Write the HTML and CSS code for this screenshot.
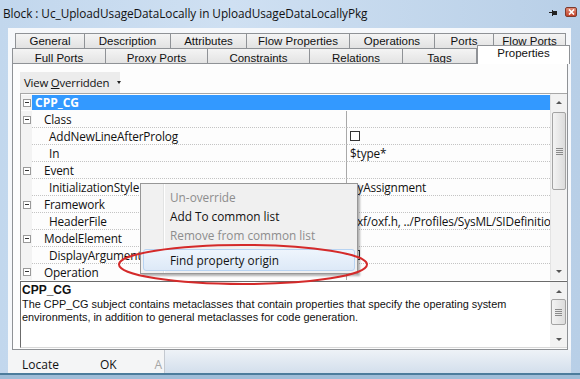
FILE: index.html
```html
<!DOCTYPE html>
<html lang="en">
<head>
    <meta charset="UTF-8">
    <meta name="viewport" content="width=device-width, initial-scale=1.0">
    <title>Block : Uc_UploadUsageDataLocally in UploadUsageDataLocallyPkg</title>
    <link rel="stylesheet" href="styles.css">
</head>
<body>
<div class="window">
    <div class="titlebar">
        <span class="title">Block : Uc_UploadUsageDataLocally in UploadUsageDataLocallyPkg</span>
        <svg class="pin" width="8" height="6" viewBox="0 0 8 6">
            <rect x="0" y="2" width="3" height="1" fill="#222"/>
            <rect x="3" y="0" width="1" height="6" fill="#222"/>
            <rect x="4" y="1" width="4" height="4" fill="#222"/>
        </svg>
        <span class="close">
            <svg width="7" height="6" viewBox="0 0 7 6">
                <path d="M1 0.5 L6 5.5 M6 0.5 L1 5.5" stroke="#fff" stroke-width="1.6"/>
            </svg>
        </span>
    </div>

    <div class="client">
        <div class="tabs">
            <div class="tabrow row1">
                <span class="tab">General</span>
                <span class="tab">Description</span>
                <span class="tab">Attributes</span>
                <span class="tab">Flow Properties</span>
                <span class="tab">Operations</span>
                <span class="tab">Ports</span>
                <span class="tab">Flow Ports</span>
            </div>
            <div class="tabrow row2">
                <span class="tab">Full Ports</span>
                <span class="tab">Proxy Ports</span>
                <span class="tab">Constraints</span>
                <span class="tab">Relations</span>
                <span class="tab">Tags</span>
                <span class="tab active">Properties</span>
            </div>
        </div>

        <div class="page">
            <div class="toolbar">
                <span class="view-btn"><span>View <u>O</u>verridden</span><span class="caret"></span></span>
            </div>

            <div class="grid">
                <div class="rows">
                    <div class="row selected">
                        <span class="gut"><i class="minus"></i></span>
                        <span class="name lvl0">CPP_CG</span>
                    </div>
                    <div class="row">
                        <span class="gut"><i class="minus"></i></span>
                        <span class="name lvl1">Class</span>
                        <span class="value"></span>
                    </div>
                    <div class="row">
                        <span class="gut"></span>
                        <span class="name lvl2">AddNewLineAfterProlog</span>
                        <span class="value"><i class="check"></i></span>
                    </div>
                    <div class="row">
                        <span class="gut"></span>
                        <span class="name lvl2">In</span>
                        <span class="value">$type*</span>
                    </div>
                    <div class="row">
                        <span class="gut"><i class="minus"></i></span>
                        <span class="name lvl1">Event</span>
                        <span class="value"></span>
                    </div>
                    <div class="row">
                        <span class="gut"></span>
                        <span class="name lvl2">InitializationStyle</span>
                        <span class="value">ByAssignment</span>
                    </div>
                    <div class="row">
                        <span class="gut"><i class="minus"></i></span>
                        <span class="name lvl1">Framework</span>
                        <span class="value"></span>
                    </div>
                    <div class="row">
                        <span class="gut"></span>
                        <span class="name lvl2">HeaderFile</span>
                        <span class="value">oxf/oxf.h, ../Profiles/SysML/SIDefinitio</span>
                    </div>
                    <div class="row">
                        <span class="gut"><i class="minus"></i></span>
                        <span class="name lvl1">ModelElement</span>
                        <span class="value"></span>
                    </div>
                    <div class="row">
                        <span class="gut"></span>
                        <span class="name lvl2">DisplayArguments</span>
                        <span class="value"><i class="check"></i></span>
                    </div>
                    <div class="row last">
                        <span class="gut"><i class="minus"></i></span>
                        <span class="name lvl1">Operation</span>
                        <span class="value"></span>
                    </div>
                </div>
                <div class="vscroll">
                    <span class="arrow up"></span>
                    <span class="thumb tall"><i class="grip"></i></span>
                    <span class="track"></span>
                    <span class="arrow down"></span>
                </div>
            </div>

            <div class="desc">
                <div class="desc-text">
                    <b>CPP_CG</b>
                    <p>The CPP_CG subject contains metaclasses that contain properties that specify the operating system environments, in addition to general metaclasses for code generation.</p>
                </div>
                <div class="vscroll small">
                    <span class="arrow up"></span>
                    <span class="thumb short"><i class="grip"></i></span>
                    <span class="track"></span>
                    <span class="arrow down"></span>
                </div>
            </div>
        </div>

        <div class="bottombar">
            <div class="buttons">
                <span class="btn">Locate</span>
                <span class="btn">OK</span>
                <span class="btn disabled">A</span>
            </div>
            <div class="filler"></div>
        </div>
    </div>
    <div class="frame-bottom"></div>

    <div class="ctxmenu">
        <div class="item disabled">Un-override</div>
        <div class="item">Add To common list</div>
        <div class="item disabled">Remove from common list</div>
        <div class="sep"></div>
        <div class="item hover">Find property origin</div>
    </div>

    <svg class="mark" width="256" height="46" viewBox="0 0 256 46">
        <ellipse cx="127" cy="22.5" rx="124" ry="19.5" fill="none" stroke="#d42a2a" stroke-width="2"/>
    </svg>
</div>
</body>
</html>
```

FILE: styles.css
```css
* {
    box-sizing: border-box;
}

body {
    margin: 0;
    width: 580px;
    height: 379px;
    overflow: hidden;
    font-family: "Liberation Sans", Arial, sans-serif;
    font-size: 11px;
    color: #000;
    background: #bcd2e9;
}

.window {
    position: relative;
    width: 580px;
    height: 379px;
    display: flex;
    flex-direction: column;
    background: linear-gradient(90deg, #c2d7ed, #cfe0f2 40%, #b8cfe7);
}

/* title bar */
.titlebar {
    height: 28px;
    display: flex;
    align-items: center;
    padding: 0 3px 2px 3px;
}

.title {
    flex: 1;
    font-family: "Open Sans", sans-serif;
    font-size: 11.8px;
    color: #111;
    letter-spacing: -0.05px;
}

.pin {
    margin-right: 8px;
}

.close {
    width: 12px;
    height: 10px;
    display: flex;
    align-items: center;
    justify-content: center;
    background: linear-gradient(#e08b76, #c3432a);
    border: 1px solid #7d3a2c;
    border-radius: 2px;
    margin-top: -2px;
}

/* client area */
.client {
    flex: 1;
    margin: 0 9px 0 8px;
    background: #f6f8fb;
    display: flex;
    flex-direction: column;
    padding-top: 5px;
}

.tabrow {
    display: grid;
    height: 15px;
}

.row1 {
    margin-left: 7px;
    grid-template-columns: 70px 86px 76px 103px 85px 59px 72px;
}

.row2 {
    margin-left: 4px;
    grid-template-columns: 94px 102px 102px 93px 74px 93px;
}

.tab {
    display: flex;
    align-items: center;
    justify-content: center;
    background: linear-gradient(#f4f4f4, #e2e2e2);
    border: 1px solid #8f9296;
    border-bottom: none;
    border-left: none;
    font-size: 11.5px;
    color: #111;
}

.tab:first-child {
    border-left: 1px solid #8f9296;
}

.row2 .tab {
    padding-top: 2px;
}

.tab.active {
    background: #fff;
    margin-top: -3px;
    height: 19px;
    padding-top: 0;
    padding-bottom: 4px;
    border-left: 1px solid #8f9296;
    position: relative;
    z-index: 1;
}

/* tab page */
.page {
    height: 287px;
    margin: 0 3px 0 4px;
    background: #fdfdfd;
    border: 1px solid #8f9296;
    padding: 8px 0 0 7px;
    display: flex;
    flex-direction: column;
}

.toolbar {
    height: 21px;
    display: flex;
}

.view-btn {
    width: 100px;
    display: flex;
    align-items: center;
    padding-left: 4px;
    background: #ececec;
    font-family: "Open Sans", sans-serif;
    font-size: 11.4px;
    color: #111;
    letter-spacing: -0.2px;
    white-space: nowrap;
}

.caret {
    margin-left: 8px;
    border-left: 2px solid transparent;
    border-right: 2px solid transparent;
    border-top: 3px solid #222;
}

.grid {
    height: 187px;
    display: flex;
    border-top: 1px solid #a7a7a7;
    border-left: 1px solid #a7a7a7;
}

.rows {
    width: 529px;
    display: flex;
    flex-direction: column;
}

.row {
    height: 17px;
    display: flex;
    font-family: "Open Sans", sans-serif;
    font-size: 11.8px;
    color: #111;
    letter-spacing: -0.15px;
}

.row .gut {
    width: 11px;
    flex: none;
    display: flex;
    align-items: center;
    justify-content: center;
    background: #f3f3f3;
}

.minus {
    width: 8px;
    height: 8px;
    border: 1px solid #9a9a9a;
    background: #fff;
    position: relative;
}

.minus::after {
    content: "";
    position: absolute;
    left: 1px;
    top: 2px;
    width: 4px;
    height: 1px;
    background: #333;
}

.row .name {
    width: 315px;
    flex: none;
    display: flex;
    align-items: center;
    border-bottom: 1px dotted #c4c4c4;
    border-right: 1px solid #a9a9a9;
    white-space: nowrap;
    overflow: hidden;
}

.lvl0 {
    padding-left: 3px;
}

.lvl1 {
    padding-left: 12px;
}

.lvl2 {
    padding-left: 17px;
}

.row .value {
    flex: 1;
    display: flex;
    align-items: center;
    padding-left: 3px;
    border-bottom: 1px dotted #c4c4c4;
    white-space: nowrap;
    overflow: hidden;
}

.row.last .name,
.row.last .value {
    border-bottom: none;
}

.row.selected {
    padding: 1px 0;
}

.row.selected .name {
    width: 518px;
    background: #3399ff;
    color: #fff;
    font-weight: bold;
    border: none;
    font-size: 12px;
    letter-spacing: 0;
}

.check {
    width: 10px;
    height: 10px;
    border: 1px solid #333;
    background: #fff;
}

/* scrollbars */
.vscroll {
    width: 17px;
    flex: none;
    display: flex;
    flex-direction: column;
    background: #f2f2f2;
    border-left: 1px solid #e3e3e3;
}

.arrow {
    height: 17px;
    flex: none;
    display: flex;
    align-items: center;
    justify-content: center;
}

.arrow::after {
    content: "";
    border-left: 3px solid transparent;
    border-right: 3px solid transparent;
}

.arrow.up::after {
    border-bottom: 3px solid #555;
}

.arrow.down::after {
    border-top: 3px solid #555;
}

.thumb {
    flex: none;
    margin: 0 1px;
    background: linear-gradient(90deg, #f3f3f3, #dcdcdc);
    border: 1px solid #a3a3a3;
    border-radius: 2px;
    display: flex;
    align-items: center;
    justify-content: center;
}

.thumb.tall {
    height: 78px;
    margin-top: 1px;
}

.thumb.short {
    height: 26px;
}

.grip {
    width: 7px;
    height: 7px;
    background: repeating-linear-gradient(#8a8a8a 0 1px, transparent 1px 2px);
}

.track {
    flex: 1;
}

/* description */
.desc {
    margin-top: 1px;
    height: 67px;
    display: flex;
    border-top: 1px solid #6b6b6b;
    border-left: 1px solid #6b6b6b;
    border-bottom: 1px solid #d9d9d9;
    background: #fff;
}

.desc-text {
    flex: 1;
    padding: 2px 0 0 1px;
    font-size: 10.9px;
    line-height: 13.5px;
    color: #111;
}

.desc-text b {
    font-size: 12px;
}

.desc-text p {
    margin: 0;
    width: 500px;
}

.vscroll.small {
    border-left: none;
    padding-top: 1px;
}

.vscroll.small .arrow {
    height: 16px;
}

/* bottom buttons */
.bottombar {
    flex: 1;
    display: flex;
}

.buttons {
    width: 157px;
    flex: none;
    display: flex;
    align-items: center;
    overflow: hidden;
    background: #f4f5f6;
    border-right: 1px solid #c4c9d0;
    font-family: "Open Sans", sans-serif;
    font-size: 12px;
    color: #111;
    padding-left: 14px;
    padding-top: 6px;
}

.btn {
    margin-right: 41px;
    white-space: nowrap;
}

.btn.disabled {
    color: #a5a5a5;
    margin-left: -3px;
    margin-right: 0;
}

.filler {
    flex: 1;
    background: linear-gradient(#eef2f7, #d3dfec);
}

.frame-bottom {
    height: 6px;
    border-top: 2px solid #4c7c9c;
    background: #9fbdd8;
}

/* context menu */
.ctxmenu {
    position: absolute;
    left: 140px;
    top: 183px;
    width: 218px;
    padding: 3px 2px 2px 2px;
    background: linear-gradient(90deg, #f1f1f1 0 22px, #e2e3e3 22px 23px, #fff 23px 24px, #f0f0f0 24px);
    border: 1px solid #979797;
    box-shadow: 2px 2px 2px rgba(0, 0, 0, 0.3);
    font-family: "Open Sans", sans-serif;
    font-size: 11.8px;
    color: #111;
    z-index: 5;
}

.item {
    height: 19px;
    display: flex;
    align-items: center;
    padding-left: 27px;
    white-space: nowrap;
}

.item.disabled {
    color: #8d8d8d;
}

.sep {
    height: 5px;
}

.item.hover {
    height: 22px;
    background: linear-gradient(#eef5fd, #dde9f7);
    border: 1px solid #b7d3f2;
    border-radius: 3px;
    padding-left: 26px;
}

.mark {
    position: absolute;
    left: 116px;
    top: 242px;
    z-index: 6;
}
```
